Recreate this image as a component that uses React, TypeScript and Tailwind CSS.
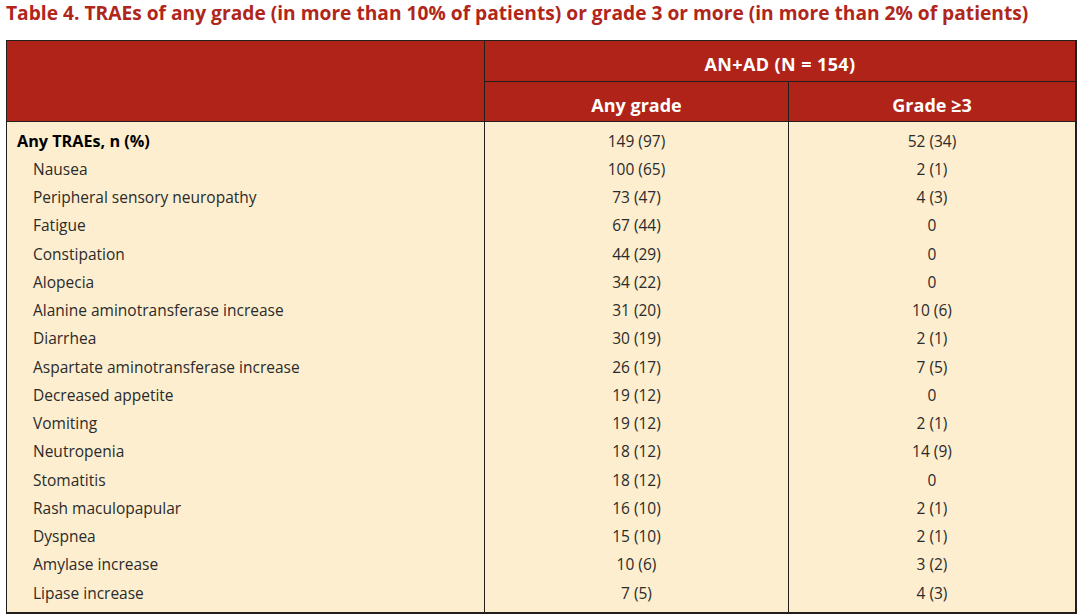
import React from "react";

const rows: [string, string, string][] = [
  ["Nausea", "100 (65)", "2 (1)"],
  ["Peripheral sensory neuropathy", "73 (47)", "4 (3)"],
  ["Fatigue", "67 (44)", "0"],
  ["Constipation", "44 (29)", "0"],
  ["Alopecia", "34 (22)", "0"],
  ["Alanine aminotransferase increase", "31 (20)", "10 (6)"],
  ["Diarrhea", "30 (19)", "2 (1)"],
  ["Aspartate aminotransferase increase", "26 (17)", "7 (5)"],
  ["Decreased appetite", "19 (12)", "0"],
  ["Vomiting", "19 (12)", "2 (1)"],
  ["Neutropenia", "18 (12)", "14 (9)"],
  ["Stomatitis", "18 (12)", "0"],
  ["Rash maculopapular", "16 (10)", "2 (1)"],
  ["Dyspnea", "15 (10)", "2 (1)"],
  ["Amylase increase", "10 (6)", "3 (2)"],
  ["Lipase increase", "7 (5)", "4 (3)"],
];

export default function App() {
  return (
    <div
      className="w-[1080px] h-[616px] bg-white overflow-hidden"
      style={{ fontFamily: "'Open Sans', Lato, sans-serif" }}
    >
      <div className="h-[40px] pl-[6px] pt-[1px] text-[19.2px] font-bold text-[#b0261a] leading-[24px] whitespace-nowrap">
        Table 4. TRAEs of any grade (in more than 10% of patients) or grade 3 or more (in more than 2% of patients)
      </div>
      <div className="ml-[6px] w-[1071px] border-t border-l border-r-2 border-b-2 border-[#231f1c]">
        <div className="flex bg-[#b02318] text-white font-bold text-[18px]">
          <div className="w-[478px] h-[80px] border-r border-[#231f1c]" />
          <div className="flex-1 flex flex-col">
            <div className="h-[41px] flex items-center justify-center pt-[7px] border-b border-[#231f1c] tracking-[0.4px]">
              AN+AD (N = 154)
            </div>
            <div className="h-[39px] flex">
              <div className="w-[304px] flex items-center justify-center pt-[7px] border-r border-[#231f1c]">
                Any grade
              </div>
              <div className="flex-1 flex items-center justify-center pt-[7px]">Grade ≥3</div>
            </div>
          </div>
        </div>
        <div className="flex bg-[#fdeecf] border-t border-[#231f1c] text-[15.5px] text-[#2b2b2b]">
          <div className="w-[478px] border-r border-[#231f1c] py-[5px]">
            <div className="h-[28.25px] flex items-center pl-[10px] font-bold text-black text-[16.2px]">
              Any TRAEs, n (%)
            </div>
            {rows.map((r) => (
              <div key={r[0]} className="h-[28.25px] flex items-center pl-[26px]">
                {r[0]}
              </div>
            ))}
          </div>
          <div className="w-[304px] border-r border-[#231f1c] py-[5px]">
            <div className="h-[28.25px] flex items-center justify-center">149 (97)</div>
            {rows.map((r) => (
              <div key={r[0]} className="h-[28.25px] flex items-center justify-center">
                {r[1]}
              </div>
            ))}
          </div>
          <div className="flex-1 py-[5px]">
            <div className="h-[28.25px] flex items-center justify-center">52 (34)</div>
            {rows.map((r) => (
              <div key={r[0]} className="h-[28.25px] flex items-center justify-center">
                {r[2]}
              </div>
            ))}
          </div>
        </div>
      </div>
    </div>
  );
}
